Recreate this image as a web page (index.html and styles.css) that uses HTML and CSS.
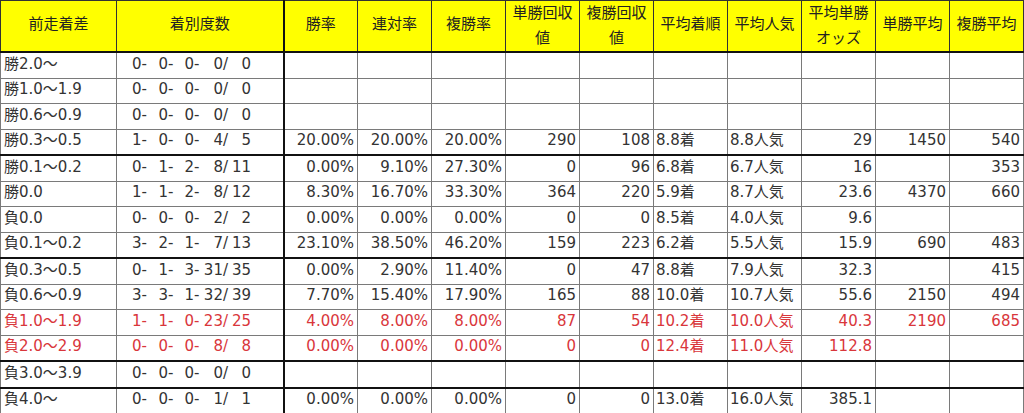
FILE: index.html
```html
<!DOCTYPE html>
<html lang="ja">
<head>
<meta charset="utf-8">
<title>前走着差</title>
<link rel="stylesheet" href="styles.css">
</head>
<body>
<table class="grid">
  <colgroup>
    <col class="c-label"><col class="c-count"><col class="c-n"><col class="c-n"><col class="c-n"><col class="c-n"><col class="c-n"><col class="c-n"><col class="c-n"><col class="c-n"><col class="c-n"><col class="c-n">
  </colgroup>
  <thead>
    <tr>
      <th>前走着差</th><th>着別度数</th><th class="thick-l">勝率</th><th>連対率</th><th>複勝率</th><th class="two">単勝回収<br>値</th><th class="two">複勝回収<br>値</th><th>平均着順</th><th>平均人気</th><th class="two">平均単勝<br>オッズ</th><th>単勝平均</th><th>複勝平均</th>
    </tr>
  </thead>
  <tbody>
    <tr><td class="lb">勝2.0〜</td><td class="ct"><span class="f1">0-</span><span class="f2">0-</span><span class="f3">0-</span><span class="f4">0/</span><span class="f5">0</span></td><td class="thick-l"></td><td></td><td></td><td></td><td></td><td></td><td></td><td></td><td></td><td></td></tr>
    <tr><td class="lb">勝1.0〜1.9</td><td class="ct"><span class="f1">0-</span><span class="f2">0-</span><span class="f3">0-</span><span class="f4">0/</span><span class="f5">0</span></td><td class="thick-l"></td><td></td><td></td><td></td><td></td><td></td><td></td><td></td><td></td><td></td></tr>
    <tr><td class="lb">勝0.6〜0.9</td><td class="ct"><span class="f1">0-</span><span class="f2">0-</span><span class="f3">0-</span><span class="f4">0/</span><span class="f5">0</span></td><td class="thick-l"></td><td></td><td></td><td></td><td></td><td></td><td></td><td></td><td></td><td></td></tr>
    <tr class="thick-b"><td class="lb">勝0.3〜0.5</td><td class="ct"><span class="f1">1-</span><span class="f2">0-</span><span class="f3">0-</span><span class="f4">4/</span><span class="f5">5</span></td><td class="thick-l">20.00%</td><td>20.00%</td><td>20.00%</td><td>290</td><td>108</td><td class="l">8.8着</td><td class="l">8.8人気</td><td>29</td><td>1450</td><td>540</td></tr>
    <tr><td class="lb">勝0.1〜0.2</td><td class="ct"><span class="f1">0-</span><span class="f2">1-</span><span class="f3">2-</span><span class="f4">8/</span><span class="f5">11</span></td><td class="thick-l">0.00%</td><td>9.10%</td><td>27.30%</td><td>0</td><td>96</td><td class="l">6.8着</td><td class="l">6.7人気</td><td>16</td><td></td><td>353</td></tr>
    <tr><td class="lb">勝0.0</td><td class="ct"><span class="f1">1-</span><span class="f2">1-</span><span class="f3">2-</span><span class="f4">8/</span><span class="f5">12</span></td><td class="thick-l">8.30%</td><td>16.70%</td><td>33.30%</td><td>364</td><td>220</td><td class="l">5.9着</td><td class="l">8.7人気</td><td>23.6</td><td>4370</td><td>660</td></tr>
    <tr><td class="lb">負0.0</td><td class="ct"><span class="f1">0-</span><span class="f2">0-</span><span class="f3">0-</span><span class="f4">2/</span><span class="f5">2</span></td><td class="thick-l">0.00%</td><td>0.00%</td><td>0.00%</td><td>0</td><td>0</td><td class="l">8.5着</td><td class="l">4.0人気</td><td>9.6</td><td></td><td></td></tr>
    <tr class="thick-b"><td class="lb">負0.1〜0.2</td><td class="ct"><span class="f1">3-</span><span class="f2">2-</span><span class="f3">1-</span><span class="f4">7/</span><span class="f5">13</span></td><td class="thick-l">23.10%</td><td>38.50%</td><td>46.20%</td><td>159</td><td>223</td><td class="l">6.2着</td><td class="l">5.5人気</td><td>15.9</td><td>690</td><td>483</td></tr>
    <tr><td class="lb">負0.3〜0.5</td><td class="ct"><span class="f1">0-</span><span class="f2">1-</span><span class="f3">3-</span><span class="f4">31/</span><span class="f5">35</span></td><td class="thick-l">0.00%</td><td>2.90%</td><td>11.40%</td><td>0</td><td>47</td><td class="l">8.8着</td><td class="l">7.9人気</td><td>32.3</td><td></td><td>415</td></tr>
    <tr><td class="lb">負0.6〜0.9</td><td class="ct"><span class="f1">3-</span><span class="f2">3-</span><span class="f3">1-</span><span class="f4">32/</span><span class="f5">39</span></td><td class="thick-l">7.70%</td><td>15.40%</td><td>17.90%</td><td>165</td><td>88</td><td class="l">10.0着</td><td class="l">10.7人気</td><td>55.6</td><td>2150</td><td>494</td></tr>
    <tr class="hot"><td class="lb">負1.0〜1.9</td><td class="ct"><span class="f1">1-</span><span class="f2">1-</span><span class="f3">0-</span><span class="f4">23/</span><span class="f5">25</span></td><td class="thick-l">4.00%</td><td>8.00%</td><td>8.00%</td><td>87</td><td>54</td><td class="l">10.2着</td><td class="l">10.0人気</td><td>40.3</td><td>2190</td><td>685</td></tr>
    <tr class="hot thick-b"><td class="lb">負2.0〜2.9</td><td class="ct"><span class="f1">0-</span><span class="f2">0-</span><span class="f3">0-</span><span class="f4">8/</span><span class="f5">8</span></td><td class="thick-l">0.00%</td><td>0.00%</td><td>0.00%</td><td>0</td><td>0</td><td class="l">12.4着</td><td class="l">11.0人気</td><td>112.8</td><td></td><td></td></tr>
    <tr class="thick-b"><td class="lb">負3.0〜3.9</td><td class="ct"><span class="f1">0-</span><span class="f2">0-</span><span class="f3">0-</span><span class="f4">0/</span><span class="f5">0</span></td><td class="thick-l"></td><td></td><td></td><td></td><td></td><td></td><td></td><td></td><td></td><td></td></tr>
    <tr><td class="lb">負4.0〜</td><td class="ct"><span class="f1">0-</span><span class="f2">0-</span><span class="f3">0-</span><span class="f4">1/</span><span class="f5">1</span></td><td class="thick-l">0.00%</td><td>0.00%</td><td>0.00%</td><td>0</td><td>0</td><td class="l">13.0着</td><td class="l">16.0人気</td><td>385.1</td><td></td><td></td></tr>
  </tbody>
</table>
</body>
</html>
```

FILE: styles.css
```css
html, body {
  margin: 0;
  padding: 0;
  background: #ffffff;
}

.grid {
  border-collapse: collapse;
  table-layout: fixed;
  width: 1023px;
  font-family: "DejaVu Sans", "Noto Sans CJK JP", sans-serif;
  font-size: 15px;
  color: #333333;
}

.c-label { width: 116px; }
.c-count { width: 167px; }
.c-n { width: 74px; }

.grid th,
.grid td {
  border: 1px solid #7a7a7a;
  padding: 0 3px;
  white-space: nowrap;
  overflow: hidden;
}

.grid th {
  background: #ffff00;
  height: 45px;
  padding-bottom: 3px;
  font-weight: normal;
  text-align: center;
  line-height: 25px;
  border-color: #333333;
  border-bottom: 2px solid #111111;
  color: #222222;
}

.grid th.two {
  padding-bottom: 0;
  padding-top: 0;
}

.grid td {
  height: 21.5px;
  padding-bottom: 3px;
  line-height: 18px;
  text-align: right;
}

.grid td.lb {
  text-align: left;
  padding-left: 3px;
}

.grid td.l {
  text-align: left;
  padding-left: 2px;
}

.grid td.ct {
  text-align: left;
  padding-left: 0;
  padding-right: 0;
}

.ct span {
  display: inline-block;
  text-align: right;
}

.ct .f1 { width: 30px; }
.ct .f2 { width: 26.5px; }
.ct .f3 { width: 26px; }
.ct .f4 { width: 28.5px; }
.ct .f5 { width: 23px; }

.grid .thick-l {
  border-left: 2px solid #111111;
}

.grid tr.thick-b td {
  border-bottom: 2px solid #111111;
}

.grid tr.hot td {
  color: #d9363b;
}
```
